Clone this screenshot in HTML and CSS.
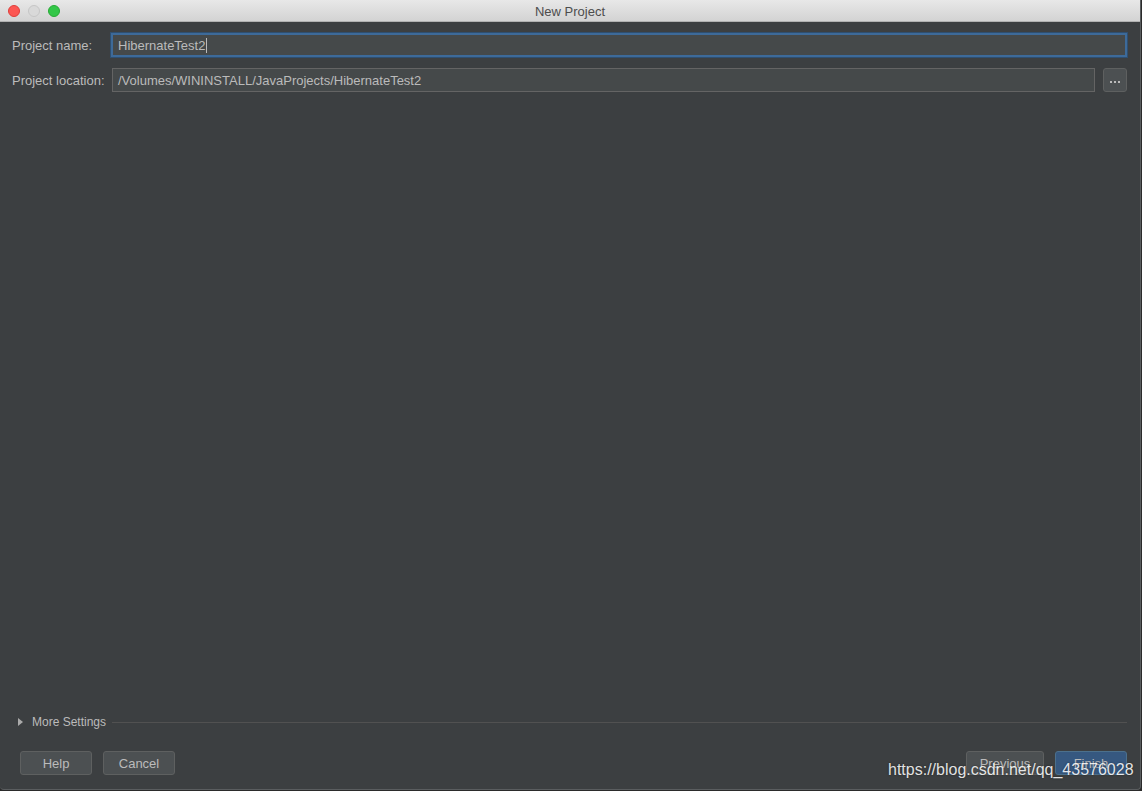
FILE: index.html
```html
<!DOCTYPE html>
<html>
<head>
<meta charset="utf-8">
<link rel="stylesheet" href="styles.css">
</head>
<body>
<div class="window">
  <div class="titlebar">
    <div class="lights">
      <span class="light red"></span>
      <span class="light gray"></span>
      <span class="light green"></span>
    </div>
    <div class="title">New Project</div>
  </div>
  <div class="content">
    <div class="form">
      <div class="row">
        <label class="label">Project name:</label>
        <div class="field focused">HibernateTest2<span class="caret"></span></div>
      </div>
      <div class="row">
        <label class="label">Project location:</label>
        <div class="field">/Volumes/WININSTALL/JavaProjects/HibernateTest2</div>
        <button class="browse"><span></span><span></span><span></span></button>
      </div>
    </div>
    <div class="more">
      <span class="tri"></span>
      <span class="more-text">More Settings</span>
      <span class="sep"></span>
    </div>
    <div class="buttons">
      <div class="group">
        <button class="btn w72">Help</button>
        <button class="btn w72">Cancel</button>
      </div>
      <div class="group">
        <button class="btn w78">Previous</button>
        <button class="btn primary w72">Finish</button>
      </div>
    </div>
  </div>
  <div class="watermark">https://blog.csdn.net/qq_43576028</div>
</div>
</body>
</html>
```

FILE: styles.css
```css
* { box-sizing: border-box; }
html, body {
  margin: 0;
  padding: 0;
  background: #2b2b2b;
  width: 1142px;
  height: 791px;
  overflow: hidden;
}
.window {
  position: relative;
  width: 1141px;
  height: 790px;
  background: #3c3f41;
  border-right: 1px solid #5a5d5f;
  border-bottom: 1px solid #5a5d5f;
  display: flex;
  flex-direction: column;
  font-family: "Liberation Sans", Arial, sans-serif;
  font-size: 13px;
  color: #bbbbbb;
  border-radius: 0 0 4px 4px;
  overflow: hidden;
}
.titlebar {
  height: 22px;
  flex: none;
  background: linear-gradient(#e8e8e8, #d3d3d3);
  border-bottom: 1px solid #b1b1b1;
  position: relative;
  display: flex;
  align-items: center;
  justify-content: center;
}
.lights {
  position: absolute;
  left: 8px;
  top: 5px;
  display: flex;
  gap: 8px;
}
.light {
  width: 12px;
  height: 12px;
  border-radius: 50%;
}
.light.red { background: #fc5753; border: 1px solid #df3e3a; }
.light.gray { background: #d9d9d9; border: 1px solid #c6c6c6; }
.light.green { background: #33c748; border: 1px solid #27aa35; }
.title {
  font-size: 13px;
  color: #4d4d4d;
  padding-top: 1px;
}
.content {
  flex: 1;
  display: flex;
  flex-direction: column;
  padding: 11px 13px 14px 12px;
}
.form {
  flex: 1;
  display: flex;
  flex-direction: column;
  gap: 11px;
}
.row {
  display: flex;
  align-items: center;
  height: 24px;
}
.label {
  width: 100px;
  flex: none;
  white-space: nowrap;
}
.field {
  flex: 1;
  height: 24px;
  background: #45494a;
  border: 1px solid #646464;
  padding: 0 5px;
  display: flex;
  align-items: center;
  color: #bbbbbb;
  white-space: nowrap;
}
.field.focused {
  border: 2px solid #3d6a99;
  margin-left: -1px;
  padding-left: 5px;
  box-shadow: 0 0 0 1px #2f4f70;
}
.caret {
  display: inline-block;
  width: 1px;
  height: 15px;
  background: #bbbbbb;
  margin-left: 1px;
}
.browse {
  width: 24px;
  height: 24px;
  flex: none;
  margin-left: 8px;
  background: #4c5052;
  border: 1px solid #5e6060;
  border-radius: 3px;
  display: flex;
  align-items: center;
  justify-content: center;
  gap: 2px;
  padding: 0;
  padding-top: 3px;
}
.browse span {
  width: 2px;
  height: 2px;
  background: #bbbbbb;
}
.more {
  display: flex;
  align-items: center;
  height: 14px;
  margin-left: 6px;
  margin-bottom: 22px;
  font-size: 12px;
}
.tri {
  width: 0;
  height: 0;
  border-top: 4px solid transparent;
  border-bottom: 4px solid transparent;
  border-left: 5px solid #aaaaaa;
  margin-right: 9px;
}
.more-text {
  white-space: nowrap;
  margin-right: 6px;
}
.sep {
  flex: 1;
  height: 1px;
  background: #515151;
}
.buttons {
  display: flex;
  justify-content: space-between;
  padding-left: 8px;
}
.group {
  display: flex;
  gap: 11px;
}
.btn {
  height: 24px;
  background: #4c5052;
  border: 1px solid #5e6060;
  border-radius: 3px;
  color: #bbbbbb;
  font-family: "Liberation Sans", Arial, sans-serif;
  font-size: 13px;
  padding: 0;
}
.btn.w72 { width: 72px; }
.btn.w78 { width: 78px; }
.btn.primary {
  background: #365880;
  border-color: #4c708c;
}
.watermark {
  position: absolute;
  left: 888px;
  top: 761px;
  font-size: 16px;
  color: #ffffff;
  text-shadow: 0 0 2px rgba(0,0,0,0.6);
  opacity: 0.85;
  white-space: nowrap;
  font-family: "Liberation Sans", Arial, sans-serif;
}
```
